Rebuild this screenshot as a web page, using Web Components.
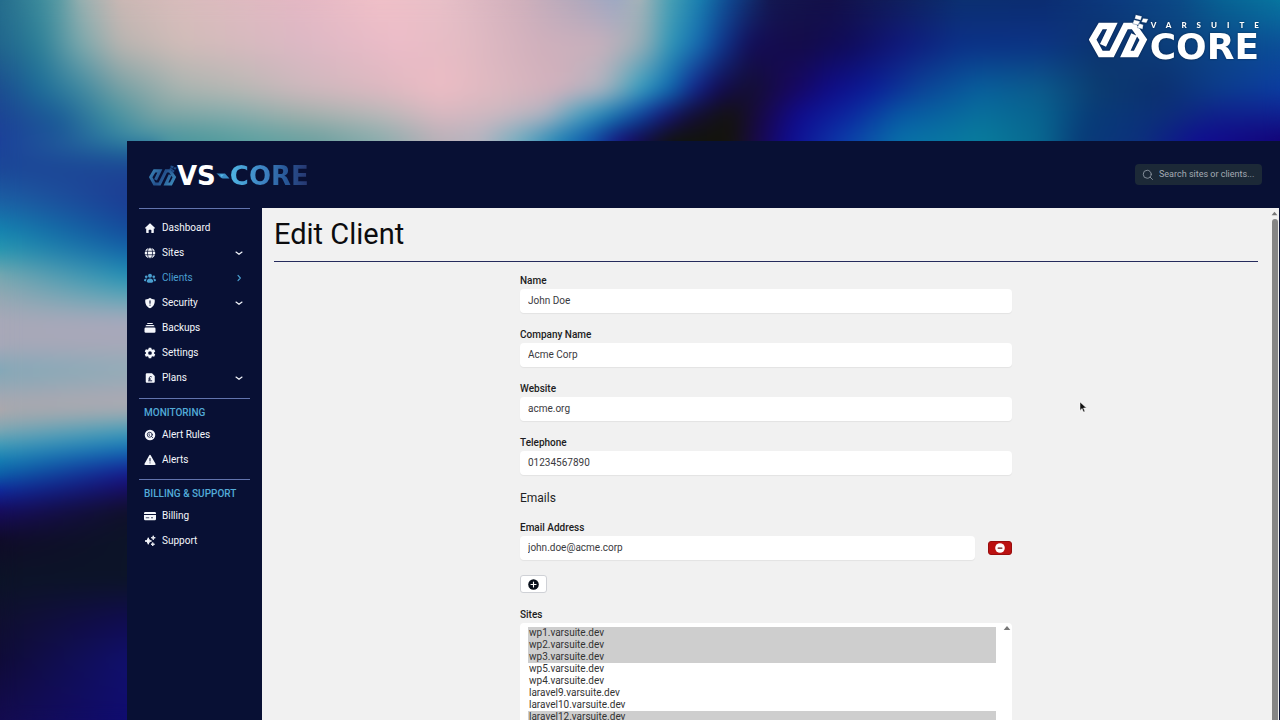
<!DOCTYPE html>
<html lang="en">
<head>
<meta charset="utf-8">
<meta name="viewport" content="width=device-width, initial-scale=1">
<title>Edit Client - VS-CORE</title>
<style>
  html, body { height: 100%; margin: 0; overflow: hidden; background: #0c1428; }
  body { font-family: Roboto, "Liberation Sans", sans-serif; font-size: 10px; }
</style>
</head>
<body>
<vs-desktop>
  <vs-brand slot="brand"></vs-brand>
  <vs-app>
    <vs-nav slot="nav">
      <vs-nav-section>
        <vs-nav-item icon="home">Dashboard</vs-nav-item>
        <vs-nav-item icon="globe" more="down">Sites</vs-nav-item>
        <vs-nav-item icon="users" more="right" active>Clients</vs-nav-item>
        <vs-nav-item icon="shield" more="down">Security</vs-nav-item>
        <vs-nav-item icon="stack">Backups</vs-nav-item>
        <vs-nav-item icon="cog">Settings</vs-nav-item>
        <vs-nav-item icon="plan" more="down">Plans</vs-nav-item>
      </vs-nav-section>
      <vs-nav-section heading="MONITORING">
        <vs-nav-item icon="rules">Alert Rules</vs-nav-item>
        <vs-nav-item icon="alert">Alerts</vs-nav-item>
      </vs-nav-section>
      <vs-nav-section heading="BILLING &amp; SUPPORT">
        <vs-nav-item icon="card">Billing</vs-nav-item>
        <vs-nav-item icon="sparkles">Support</vs-nav-item>
      </vs-nav-section>
    </vs-nav>
    <vs-client-form></vs-client-form>
  </vs-app>
  <vs-pointer slot="pointer"></vs-pointer>
</vs-desktop>

<script>
const define = (name, html, setup) => {
  const template = document.createElement('template');
  template.innerHTML = html;
  customElements.define(name, class extends HTMLElement {
    constructor() {
      super();
      this.attachShadow({ mode: 'open' }).append(template.content.cloneNode(true));
    }
    connectedCallback() { if (setup) setup(this, this.shadowRoot); }
  });
};

/* ---------- icons ---------- */
const ICONS = {
  home: '<path fill="currentColor" d="M11.3 2.9a1 1 0 0 1 1.4 0l9 8.6a1 1 0 0 1-.7 1.700h-1.400v7.100a1.700 1.700 0 0 1-1.700 1.700h-3.200v-5.600a1 1 0 0 0-1-1h-3.400a1 1 0 0 0-1 1V22H6.100a1.700 1.700 0 0 1-1.700-1.700v-7.100H3a1 1 0 0 1-.7-1.700z"/>',
  globe: '<circle cx="12" cy="12" r="10.500" fill="currentColor"/><g fill="none" stroke="#081034" stroke-width="1.500"><ellipse cx="12" cy="12" rx="5" ry="10.500"/><path d="M1.500 8.500h21M1.500 15.500h21"/></g>',
  users: '<g fill="currentColor"><circle cx="12" cy="7.500" r="4"/><circle cx="4.500" cy="9.500" r="2.700"/><circle cx="19.500" cy="9.500" r="2.700"/><path d="M5.500 20a6.500 7 0 0 1 13 0c-2 1.200-4.200 1.700-6.500 1.700S7.500 21.200 5.500 20zM0 17.500c0-3 2-4.700 4.500-4.700.5 0 1 0 1.400.2A8 8 0 0 0 4 18.600c-1.500 0-3-.3-4-1.100zM24 17.500c0-3-2-4.700-4.500-4.700-.5 0-1 0-1.400.2a8 8 0 0 1 1.900 5.600c1.500 0 3-.3 4-1.100z"/></g>',
  shield: '<path fill="currentColor" d="M12 1.500c2.700 2.300 5.800 3.400 9.300 3.300 1.300 7.800-2.100 14.600-9.300 17.700C4.800 19.400 1.400 12.600 2.700 4.800c3.500.1 6.600-1 9.300-3.300z"/><path stroke="#081034" stroke-width="2.200" stroke-linecap="round" d="M12 7.500v5M12 16.300v.2"/>',
  stack: '<g fill="currentColor"><path d="M8 2h8a2 2 0 0 1 2 2H6a2 2 0 0 1 2-2zM6 6h12a3 3 0 0 1 3 2.500H3A3 3 0 0 1 6 6z"/><rect x="1" y="11" width="22" height="10.500" rx="2.500"/></g>',
  cog: '<path fill="currentColor" fill-rule="evenodd" d="M9.500 1.500h5l.7 3.200 1.800 1 3.200-1 2.300 4.200-2.400 2.200v1.800l2.400 2.200-2.300 4.200-3.200-1-1.800 1-.7 3.200h-5l-.7-3.200-1.800-1-3.200 1-2.300-4.200 2.400-2.200v-1.800L1.500 8.900l2.300-4.200 3.200 1 1.800-1zM12 8.300a3.700 3.700 0 1 0 0 7.400 3.700 3.700 0 0 0 0-7.400z"/>',
  plan: '<path fill="currentColor" d="M5.500 2.500H16L21.500 8v11.500a2 2 0 0 1-2 2h-14a2 2 0 0 1-2-2v-15a2 2 0 0 1 2-2z"/><path fill="none" stroke="#081034" stroke-width="1.800" d="M15.500 10.200c-.7-1.700-4.800-1.700-4.800 1.200 0 1.600.8 2.300.4 4.100-.2 1-1 1.900-2.100 2.100h7.300M8.300 14h5.500"/>',
  rules: '<circle cx="12" cy="12" r="10.500" fill="currentColor"/><g fill="none" stroke="#081034" stroke-width="1.600" stroke-linecap="round"><circle cx="11.500" cy="11.500" r="5"/><path d="m15.300 15.300 2.200 2.200M11 9.700a2 2 0 0 0 0 3.600"/></g>',
  alert: '<path fill="currentColor" d="M10.300 3a2 2 0 0 1 3.400 0l9 16a2 2 0 0 1-1.700 3H3a2 2 0 0 1-1.700-3z"/><path stroke="#081034" stroke-width="2" stroke-linecap="round" d="M12 9v5M12 17.800v.1"/>',
  card: '<path fill="currentColor" d="M2.500 4h19A2.500 2.500 0 0 1 24 6.500V8H0V6.500A2.500 2.500 0 0 1 2.500 4zM0 10h24v8a2.500 2.500 0 0 1-2.500 2.500h-19A2.500 2.500 0 0 1 0 18z"/><path stroke="#081034" stroke-width="1.500" d="M3.500 15.500h7M14 15.500h4"/>',
  sparkles: '<path fill="currentColor" d="M8.500 5.500c1 4 2.500 5.500 6.500 6.500-4 1-5.500 2.500-6.500 6.500-1-4-2.500-5.500-6.500-6.500 4-1 5.500-2.500 6.500-6.500zM18.500 1.500c.6 2.700 1.300 3.400 4 4-2.700.6-3.400 1.300-4 4-.6-2.700-1.300-3.400-4-4 2.700-.6 3.400-1.300 4-4zM17.500 15c.5 2.300 1.200 3 3.500 3.500-2.300.5-3 1.200-3.500 3.500-.5-2.300-1.200-3-3.500-3.500 2.300-.5 3-1.200 3.500-3.500z" stroke="currentColor" stroke-width="2" stroke-linejoin="round"/>',
  down: '<path fill="none" stroke="currentColor" stroke-width="3.500" stroke-linecap="round" stroke-linejoin="round" d="m3 9 9 7 9-7"/>',
  right: '<path fill="none" stroke="currentColor" stroke-width="3.500" stroke-linecap="round" stroke-linejoin="round" d="m9 4 7 8-7 8"/>',
  search: '<g fill="none" stroke="currentColor" stroke-width="1.800" stroke-linecap="round"><circle cx="10.500" cy="10.500" r="8"/><path d="m16.500 16.500 4.500 4.500"/></g>',
  plus: '<circle cx="12" cy="12" r="11.500" fill="currentColor"/><path stroke="#fff" stroke-width="2.500" stroke-linecap="round" d="M12 6.500v11M6.500 12h11"/>',
  minus: '<circle cx="12" cy="12" r="11.500" fill="currentColor"/><path stroke="#6e1010" stroke-width="3" stroke-linecap="round" d="M7.500 12h9"/>',
  up: '<path fill="currentColor" d="M12 6l10 12H2z"/>'
};
define('vs-icon', `<style>
  :host { display: block; flex: none; width: 12px; height: 12px; }
  svg { display: block; width: 100%; height: 100%; }
</style><svg viewBox="0 0 24 24" aria-hidden="true"></svg>`, (el, root) => {
  root.querySelector('svg').innerHTML = ICONS[el.getAttribute('name')] || '';
});

/* ---------- wallpaper: rows of colour stops blended into each other ---------- */
const TOP_ROWS = [
  [0, '0 #246c8c,40 #3d8c9c,60 #5c9ca4,80 #98b0b0,120 #ccb8b4,180 #d8bcbc,300 #e4b8c4,380 #f0c0c8,440 #e8c0c8,520 #d0b0bc,580 #b0a8bc,615 #9ca8c4,640 #a8b4b8,670 #48a0b4,700 #1880b0,730 #104890,770 #141850,830 #141048,900 #10205c,960 #0c3070,1040 #0c2c70,1120 #0c3c80,1180 #0c4c88,1220 #086494,1280 #0878a0'],
  [45, '0 #20648c,40 #2c8098,80 #78a8ac,120 #b8b4b0,180 #d0bcb8,300 #dcb8c4,400 #ecbcc8,460 #e4bcc4,540 #d0b0bc,600 #c8b0bc,630 #acb0b8,650 #80a8b4,670 #2c98b8,700 #1468b0,720 #103890,750 #140c58,800 #140c48,850 #100c5c,900 #10187c,960 #0c3088,1040 #0c3484,1100 #0c3470,1180 #0c407c,1280 #0c5098'],
  [90, '0 #1c4c90,40 #1c6c98,80 #3c88a0,120 #74a0a4,180 #a8b4b0,240 #b8b8b4,300 #ccb8bc,380 #dcb8c0,440 #ecbcc4,500 #dcb8c0,560 #d0b0bc,600 #b0b4c0,620 #78acbc,640 #30a0c0,670 #0c68b0,695 #14208c,720 #140850,750 #141030,790 #18085c,830 #100c88,870 #0c1c98,920 #0c4498,980 #08609c,1040 #0c5c8c,1100 #0c3c70,1160 #0c3070,1220 #0c3c8c,1280 #0c3ca0'],
  [115, '0 #1c4494,60 #1c6098,110 #4090a0,160 #7ca4a4,230 #84acac,300 #a0b0ac,380 #b8b8b8,440 #d8b8c0,500 #ccb8c0,545 #b0b4c0,580 #48a4c0,610 #1080b4,640 #0c44a4,665 #18107c,690 #140c38,730 #14140c,765 #180850,800 #100c90,850 #0c28a0,900 #0858a4,980 #08709c,1040 #086490,1090 #083c78,1160 #0c3078,1220 #10208c,1280 #102090'],
  [140, '0 #1c409a,60 #1c5498,100 #2874a0,140 #4090a4,200 #4c989c,260 #5ca0a0,320 #6ca0a0,380 #88acac,440 #b8b0b8,480 #b4b4c0,520 #6cacc0,560 #1880b4,590 #0c50a8,620 #180c78,640 #14084c,670 #10140c,730 #14140c,760 #180850,790 #100c90,840 #0c38a8,900 #0870a8,980 #087c9c,1040 #086890,1080 #083c78,1140 #0c307c,1200 #100c90,1280 #140478']
];
const SIDE_OUTER = '140 #1c409a,170 #1c4898,200 #1c60a4,230 #1484b0,250 #2898b0,275 #78a8b0,300 #98a8b4,320 #a8a8b8,345 #a8a8b8,370 #80a8b8,395 #a0a8b4,410 #b0a8ac,430 #80a8b4,445 #409cb8,460 #1480b4,475 #0c60a8,490 #1028a0,510 #180c60,540 #100c28,580 #0c1428,620 #101030,660 #100c38,720 #140c50';
const SIDE_INNER = '140 #3088a0,155 #1c5c98,170 #1c4494,200 #1c3c94,230 #144c9c,250 #1464a8,275 #2090b4,300 #68a8b8,320 #a8a8bc,345 #a8a8b8,370 #90acb8,395 #a8a8b4,410 #b0acb0,430 #48a0b8,445 #1880b8,460 #1048a8,475 #18148c,490 #180c60,510 #101028,540 #0c1428,580 #0c1428,620 #100c50,660 #10106c,720 #100c70';
const stops = (text, from, span) => text.split(',').map(s => {
  const [at, colour] = s.split(' ');
  return `${colour} ${((at - from) / span * 100).toFixed(2)}%`;
}).join(',');

define('vs-wallpaper', `<style>
  :host { display: block; overflow: hidden; }
  div { position: absolute; inset: 0; }
  .side { top: 140px; right: auto; width: 160px; }
  .soften { backdrop-filter: blur(9px); }
</style>`, (el, root) => {
  TOP_ROWS.forEach(([y, colours], i) => {
    const row = document.createElement('div');
    row.style.background = `linear-gradient(90deg,${stops(colours, 0, 1280)})`;
    if (i) row.style.maskImage = `linear-gradient(transparent ${TOP_ROWS[i - 1][0]}px,#000 ${y}px)`;
    root.append(row);
  });
  [SIDE_OUTER, SIDE_INNER].forEach((colours, i) => {
    const side = document.createElement('div');
    side.className = 'side';
    side.style.background = `linear-gradient(${stops(colours, 140, 580)})`;
    if (i) side.style.maskImage = 'linear-gradient(90deg,transparent,#000 80%)';
    root.append(side);
  });
  const soften = document.createElement('div');
  soften.className = 'soften';
  root.append(soften);
});

define('vs-desktop', `<style>
  :host { display: flex; flex-direction: column; height: 100vh; position: relative; isolation: isolate; }
  vs-wallpaper { position: absolute; inset: 0; z-index: -1; }
  .top { display: flex; justify-content: flex-end; box-sizing: border-box; height: 141px; padding: 14px 21px 0; }
  .window { flex: 1; min-height: 0; margin-left: 127px; display: flex; }
</style>
<vs-wallpaper></vs-wallpaper>
<div class="top"><slot name="brand"></slot></div>
<div class="window"><slot></slot></div>
<slot name="pointer"></slot>`);

/* ---------- logos ---------- */
define('vs-mark', `<style>
  :host { display: block; flex: none; width: 60px; height: 46px; }
  svg { display: block; width: 100%; height: 100%; }
</style>
<svg viewBox="0 0 180 138" aria-hidden="true">
  <defs><linearGradient id="g" gradientUnits="userSpaceOnUse" x1="0" x2="174" y1="0" y2="130">
    <stop offset="0" style="stop-color:var(--mark-a,#fff)"/><stop offset=".5" style="stop-color:var(--mark-b,#fff)"/><stop offset="1" style="stop-color:var(--mark-a,#fff)"/>
  </linearGradient></defs>
  <path fill="none" stroke="url(#g)" stroke-width="20" stroke-linejoin="miter" d="M42 94 70 36H35L11 77l24 43h33l42-84h24l29 41-22 43h-32l27-58"/>
  <g style="fill:var(--mark-b,#fff)" stroke="#0c3a74" stroke-width="1"><path d="m140 2 19 5-4 12-18-5zM162 13l16 2-6 12-15-3zM135 17l18 5-4 12-18-5zM149 28l14 4-2 14-16-5z"/></g>
</svg>`);

define('vs-brand', `<style>
  :host { display: flex; gap: 1px; color: #fff; filter: drop-shadow(0 0 1px #0006); height: 48px; }
  .words { display: flex; flex-direction: column; font-family: "DejaVu Sans", sans-serif; font-weight: 700; }
  .over { font: 900 8px/8px Lato, sans-serif; letter-spacing: 10px; margin: 7px -10px 0 1px; white-space: nowrap; }
  .name { font-size: 36px; line-height: 35px; }
</style>
<vs-mark></vs-mark>
<div class="words"><span class="over">VARSUITE</span><span class="name">CORE</span></div>`);

define('vs-logo', `<style>
  :host { display: block; }
  a { display: flex; align-items: center; padding-top: 2px; color: #fff; text-decoration: none; font: 700 26px/24px "DejaVu Sans", sans-serif; }
  vs-mark { width: 28px; height: 22px; --mark-a: #4196c4; --mark-b: #24508c; }
  svg { display: block; width: 14px; height: 8px; }
  .core { color: transparent; background: linear-gradient(90deg, #4fb4e2, #3c80c0 45%, #285898 70%, #26346c); background-clip: text; -webkit-background-clip: text; }
</style>
<a href="#"><vs-mark></vs-mark><span>VS</span><svg viewBox="0 0 28 16" aria-hidden="true"><path fill="#3a8cc4" d="M0 3h18l9 10H14C8 13 5 4 0 3z"/><path fill="#59b9e6" d="m8 5 8 0-5 5z"/></svg><span class="core">CORE</span></a>`);

/* ---------- application shell ---------- */
define('vs-search', `<style>
  :host { display: block; }
  label { display: flex; align-items: center; gap: 5px; box-sizing: border-box; width: 127px; height: 21px; padding: 0 7px; border-radius: 4px; background: #1c2937; color: #8d97a3; }
  input { flex: 1; min-width: 0; padding: 0 0 1px; border: 0; outline: 0; background: none; color: inherit; font: 9px/12px Roboto, sans-serif; }
  input::placeholder { color: #a4abb4; opacity: 1; }
</style>
<label><vs-icon name="search"></vs-icon><input type="text" aria-label="Search" placeholder="Search sites or clients..."></label>`);

define('vs-app', `<style>
  :host { flex: 1; min-width: 0; display: grid; grid-template: 67px minmax(0, 1fr) / 135px minmax(0, 1fr); background: #081034; }
  header { grid-column: 1 / -1; display: flex; align-items: center; justify-content: space-between; padding: 0 18px 0 22px; }
  main { display: flex; min-width: 0; overflow: hidden; margin-right: 1px; background: #f1f1f1; }
  .page { flex: 1; min-width: 0; padding: 8px 12px 0; }
  .bar { flex: none; width: 9px; display: flex; flex-direction: column; align-items: center; padding-top: 2px; gap: 2px; color: #777; }
  .bar vs-icon { width: 7px; height: 7px; }
  .thumb { flex: 1; width: 6px; border-radius: 3px 3px 0 0; background: #858585; }
</style>
<header><vs-logo></vs-logo><vs-search></vs-search></header>
<slot name="nav"></slot>
<main><div class="page"><slot></slot></div><div class="bar"><vs-icon name="up"></vs-icon><div class="thumb"></div></div></main>`);

define('vs-nav', `<style>
  :host { display: block; padding: 0 12px; }
</style><nav><slot></slot></nav>`);

define('vs-nav-section', `<style>
  :host { display: block; border-top: 1px solid #6274ae; padding: 6px 5px 8px; }
  :host([heading]) { padding-bottom: 7px; }
  h2 { margin: 0 0 1px; color: #52abd8; font-size: 10px; line-height: 16px; font-weight: 500; white-space: nowrap; }
  h2:empty { display: none; }
</style><h2></h2><slot></slot>`, (el, root) => {
  root.querySelector('h2').textContent = el.getAttribute('heading') || '';
});

define('vs-nav-item', `<style>
  :host { display: block; color: #f4f6fb; }
  :host([active]) { color: #4a9fd0; }
  a { display: flex; align-items: center; gap: 6px; height: 25px; color: inherit; text-decoration: none; font-size: 10px; line-height: 14px; }
  span { flex: 1; }
  .more { width: 8px; height: 8px; margin-right: 2px; }
</style><a href="#"><vs-icon class="icon"></vs-icon><span><slot></slot></span></a>`, (el, root) => {
  const icon = root.querySelector('.icon');
  icon.setAttribute('name', el.getAttribute('icon'));
  icon.connectedCallback();
  if (el.hasAttribute('more')) {
    const more = document.createElement('vs-icon');
    more.className = 'more';
    more.setAttribute('name', el.getAttribute('more'));
    root.querySelector('a').append(more);
  }
});

/* ---------- form ---------- */
define('vs-field', `<style>
  :host { display: block; flex: 1; min-width: 0; }
  label { display: block; margin-bottom: 1px; color: #1c1c22; font-size: 10px; line-height: 14px; font-weight: 500; }
  input { display: block; box-sizing: border-box; width: 100%; height: 24px; padding: 0 8px 2px; border: 0; border-radius: 4px; background: #fff; box-shadow: 0 1px 1px #0000000f; color: #3a3a3e; font: 10px/14px Roboto, sans-serif; }
</style><label for="field"></label><input id="field">`, (el, root) => {
  root.querySelector('label').textContent = el.getAttribute('label');
  const input = root.querySelector('input');
  input.type = el.getAttribute('type') || 'text';
  input.value = el.getAttribute('value');
});

define('vs-site-list', `<style>
  :host { display: block; }
  label { display: block; margin-bottom: 1px; color: #1c1c22; font-size: 10px; line-height: 14px; font-weight: 500; }
  .box { position: relative; }
  select { display: block; appearance: none; box-sizing: border-box; width: 100%; height: 130px; padding: 4px 16px 4px 8px; border: 0; border-radius: 4px; background: #fff; color: #333; font: 10px/12px Roboto, sans-serif; overflow: hidden; scrollbar-width: none; }
  option { padding: 0 1px; min-height: 12px; height: 12px; line-height: 12px; color: #333; }
  vs-icon { position: absolute; top: 1px; right: 1px; width: 8px; height: 8px; color: #777; }
</style>
<label for="sites">Sites</label>
<div class="box">
  <select id="sites" multiple>
    <option selected>wp1.varsuite.dev</option>
    <option selected>wp2.varsuite.dev</option>
    <option selected>wp3.varsuite.dev</option>
    <option>wp5.varsuite.dev</option>
    <option>wp4.varsuite.dev</option>
    <option>laravel9.varsuite.dev</option>
    <option>laravel10.varsuite.dev</option>
    <option selected>laravel12.varsuite.dev</option>
  </select>
  <vs-icon name="up"></vs-icon>
</div>`);

define('vs-client-form', `<style>
  :host { display: block; }
  h1 { margin: 0; padding-bottom: 9px; border-bottom: 1px solid #252b5c; color: #0c0c0e; font-size: 29px; line-height: 36px; font-weight: 400; }
  form { display: flex; flex-direction: column; gap: 15px; width: 50%; margin: 12px auto 0; }
  h2 { margin: 0; color: #1f1f24; font-size: 12px; line-height: 16px; font-weight: 400; }
  .row { display: flex; align-items: flex-end; gap: 13px; }
  button { display: flex; align-items: center; justify-content: center; box-sizing: border-box; padding: 0; border-radius: 3px; }
  .remove { width: 24px; height: 14px; margin-bottom: 5px; border: 1px solid #970d0d; background: #bb1111; color: #fff; }
  .remove vs-icon { width: 10px; height: 10px; }
  .add { align-self: flex-start; width: 27px; height: 18px; border: 1px solid #cfd1d6; background: #fff; color: #08101c; }
  .add vs-icon { width: 11px; height: 11px; }
</style>
<h1>Edit Client</h1>
<form>
  <vs-field label="Name" value="John Doe"></vs-field>
  <vs-field label="Company Name" value="Acme Corp"></vs-field>
  <vs-field label="Website" value="acme.org"></vs-field>
  <vs-field label="Telephone" type="tel" value="01234567890"></vs-field>
  <h2>Emails</h2>
  <div class="row">
    <vs-field label="Email Address" type="email" value="john.doe@acme.corp"></vs-field>
    <button type="button" class="remove" aria-label="Remove email"><vs-icon name="minus"></vs-icon></button>
  </div>
  <button type="button" class="add" aria-label="Add email"><vs-icon name="plus"></vs-icon></button>
  <vs-site-list></vs-site-list>
</form>`);

define('vs-pointer', `<style>
  :host { position: absolute; left: 1079px; top: 401px; width: 8px; height: 12px; pointer-events: none; }
  svg { display: block; width: 100%; height: 100%; }
</style>
<svg viewBox="0 0 16 24" aria-hidden="true"><path fill="#111" stroke="#fff" stroke-width="1" d="M2 2v17l4-4 3 7 3-1-3-7h6z"/></svg>`);
</script>
</body>
</html>
